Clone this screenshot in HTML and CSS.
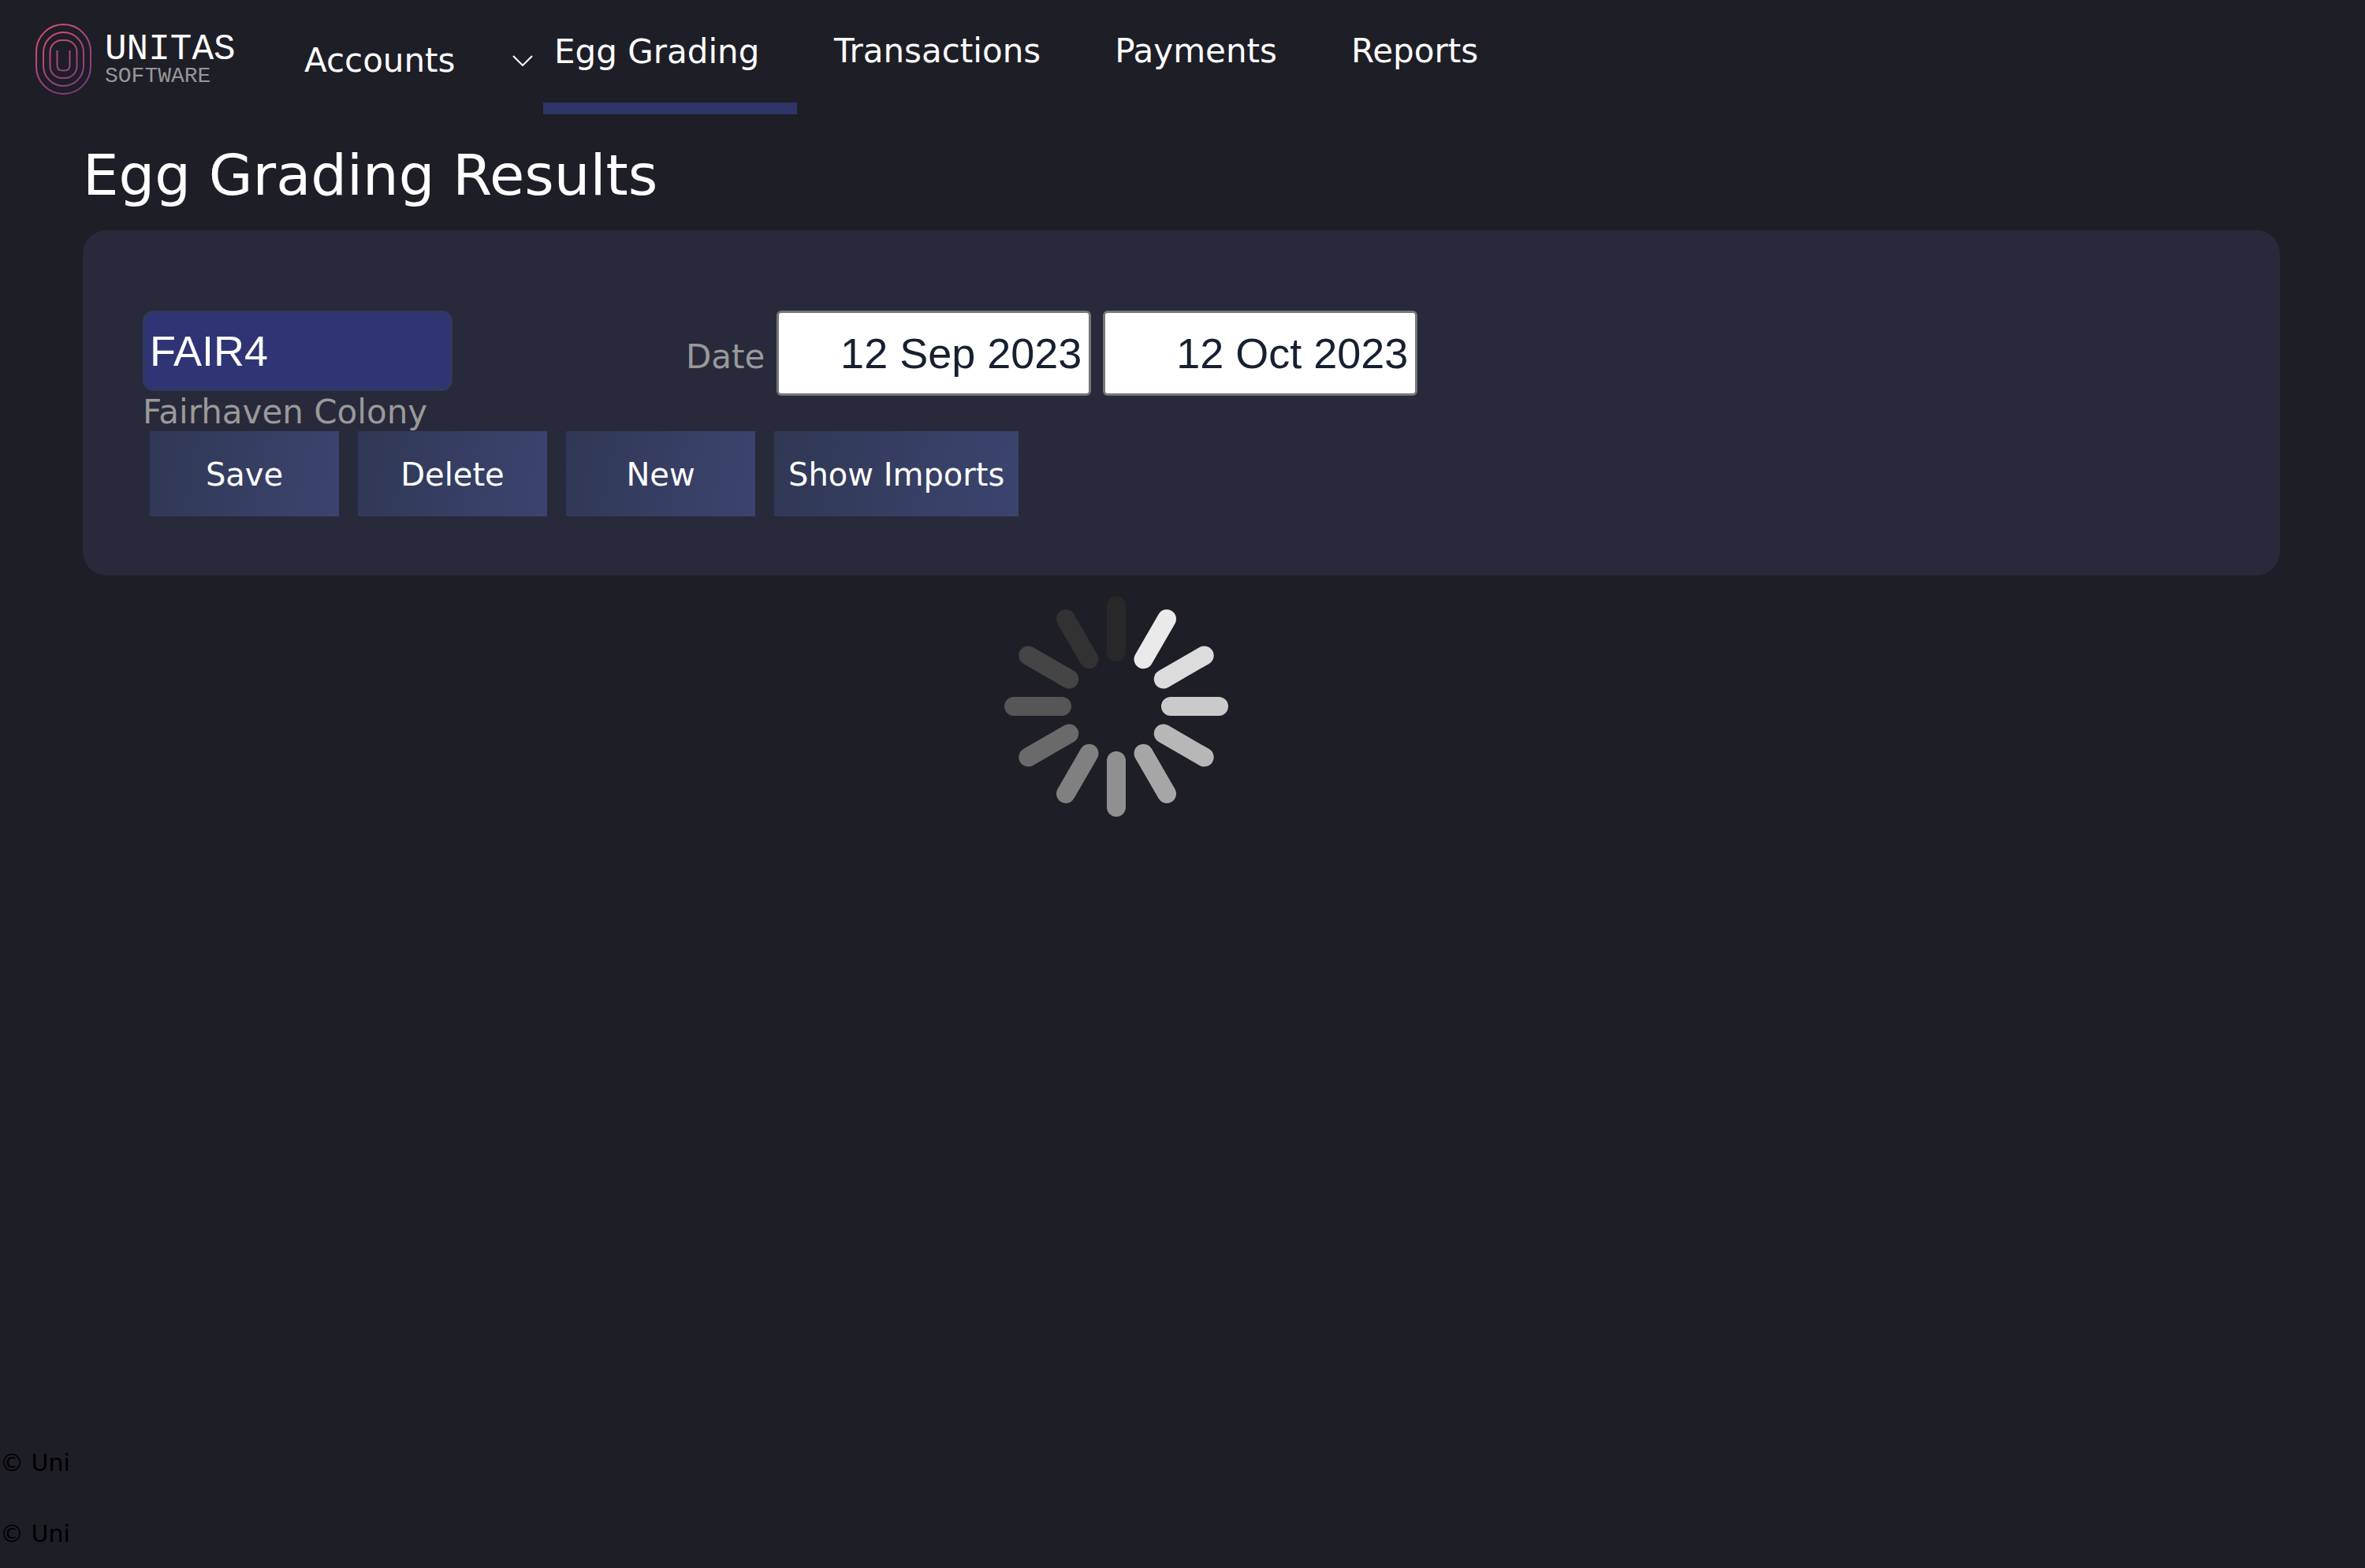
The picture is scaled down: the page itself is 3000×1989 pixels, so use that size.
FILE: index.html
```html
<!DOCTYPE html>
<html lang="en">
<head>
<meta charset="utf-8">
<title>Egg Grading Results</title>
<link rel="stylesheet" href="styles.css">
</head>
<body>
<header class="header">
  <a class="brand" href="#">
    <svg class="brand-mark" viewBox="0 0 71 90" fill="none" stroke="url(#brand)" stroke-width="2" aria-hidden="true">
      <defs>
        <linearGradient id="brand" gradientUnits="userSpaceOnUse" x1="10" y1="5" x2="62" y2="85">
          <stop offset="0" stop-color="#dc4f6f"/>
          <stop offset="1" stop-color="#733a88"/>
        </linearGradient>
      </defs>
      <rect x="1" y="1" width="69" height="88" rx="34.5"/>
      <rect x="10" y="11" width="51" height="68" rx="25.5"/>
      <rect x="18.500" y="21" width="34" height="48" rx="15"/>
      <path d="M27.500 34V52.500Q27.500 59.500 34 59.500H37Q43.500 59.500 43.500 52.500V34"/>
    </svg>
    <span class="brand-text">
      <span class="brand-name">UNITAS</span>
      <span class="brand-sub">SOFTWARE</span>
    </span>
  </a>
  <nav class="nav">
    <a class="nav-link nav-accounts" href="#">Accounts
      <svg class="chevron" viewBox="0 0 26 14" fill="none" stroke="#fff" stroke-width="2" aria-hidden="true"><path d="M1 1L13 13L25 1"/></svg>
    </a>
    <a class="nav-link nav-active" href="#">Egg Grading</a>
    <a class="nav-link" href="#">Transactions</a>
    <a class="nav-link" href="#">Payments</a>
    <a class="nav-link" href="#">Reports</a>
  </nav>
</header>
<main class="main">
  <h1 class="title">Egg Grading Results</h1>
  <form class="panel">
    <div class="fields">
      <div class="supplier">
        <input class="input-code" id="code" type="text" value="FAIR4">
        <label class="caption" for="code">Fairhaven Colony</label>
      </div>
      <div class="dates">
        <label class="date-label" for="from">Date</label>
        <input class="input-date" id="from" type="text" value="12 Sep 2023">
        <input class="input-date" id="to" type="text" value="12 Oct 2023" aria-label="Date to">
      </div>
    </div>
    <div class="actions">
      <button class="button" type="button">Save</button>
      <button class="button" type="button">Delete</button>
      <button class="button" type="button">New</button>
      <button class="button" type="button">Show Imports</button>
    </div>
  </form>
  <div class="loading" role="status" aria-label="Loading">
    <svg class="spinner" viewBox="-142 -141 284 282" stroke-width="24" stroke-linecap="round" aria-hidden="true">
      <path d="M0 -128V-69" stroke="#282828"/>
      <path d="M0 -128V-69" stroke="#eaeaea" transform="rotate(30)"/>
      <path d="M0 -129V-69" stroke="#dcdcdc" transform="rotate(60)"/>
      <path d="M0 -130V-69" stroke="#cacaca" transform="rotate(90)"/>
      <path d="M0 -129V-69" stroke="#b7b7b7" transform="rotate(120)"/>
      <path d="M0 -128V-69" stroke="#a6a6a6" transform="rotate(150)"/>
      <path d="M0 -128V-69" stroke="#909090" transform="rotate(180)"/>
      <path d="M0 -128V-69" stroke="#808080" transform="rotate(210)"/>
      <path d="M0 -129V-69" stroke="#6a6a6a" transform="rotate(240)"/>
      <path d="M0 -130V-69" stroke="#565656" transform="rotate(270)"/>
      <path d="M0 -129V-69" stroke="#454545" transform="rotate(300)"/>
      <path d="M0 -128V-69" stroke="#323232" transform="rotate(330)"/>
    </svg>
  </div>
</main>
<footer class="footer">
  <p class="copyright">© Uni</p>
  <p class="copyright">© Uni</p>
</footer>
</body>
</html>
```
FILE: styles.css
```css
* {
  box-sizing: border-box;
}

body {
  display: flex;
  flex-direction: column;
  min-height: 100vh;
  margin: 0;
  background: #1e1e26;
  color: #fff;
  font-family: Verdana, "DejaVu Sans", sans-serif;
  font-size: 42px;
  line-height: 48px;
}

.header {
  display: flex;
  align-items: flex-start;
}

.brand {
  display: flex;
  gap: 17px;
  width: 386px;
  padding: 30px 0 0 45px;
  color: #fff;
  font-family: "Liberation Mono", monospace;
  text-decoration: none;
}

.brand-mark {
  width: 71px;
  height: 90px;
}

.brand-text {
  display: flex;
  flex-direction: column;
  padding-top: 13px;
}

.brand-name {
  font-size: 46px;
  line-height: 40px;
}

.brand-sub {
  color: #96969a;
  font-size: 28px;
  line-height: 28px;
}

.nav {
  display: flex;
  align-items: flex-start;
}

.nav-link {
  margin-right: 94px;
  padding-top: 41px;
  color: #fff;
  text-decoration: none;
  white-space: nowrap;
}

.nav-accounts {
  display: flex;
  align-items: center;
  justify-content: space-between;
  width: 290px;
  margin-right: 13px;
  padding-top: 53px;
}

.chevron {
  width: 26px;
  height: 14px;
}

.nav-active {
  width: 322px;
  margin-right: 47px;
  padding: 42px 0 40px 14px;
  border-bottom: 15px solid #2f3469;
}

.main {
  flex: 1;
  padding: 36px 108px 0 105px;
}

.title {
  margin: 0 0 28px;
  font-size: 72px;
  font-weight: 400;
  line-height: 83px;
}

.panel {
  padding: 102px 76px 75px;
  border-radius: 30px;
  background: #28293a;
}

.fields {
  display: grid;
  grid-template-columns: 689px 1fr;
}

.supplier {
  display: flex;
  flex-direction: column;
  align-items: flex-start;
}

.input-code,
.input-date {
  font-family: Arial, "Liberation Sans", sans-serif;
  font-size: 54px;
}

.input-code {
  width: 393px;
  height: 102px;
  padding: 0 6px;
  border: 3px solid #303a5a;
  border-radius: 14px;
  background: #2f3574;
  color: #fff;
}

.caption {
  padding-top: 3px;
  color: #999;
  line-height: 48px;
}

.dates {
  display: flex;
  align-items: baseline;
  gap: 15px;
}

.date-label {
  color: #999;
}

.input-date {
  width: 399px;
  height: 108px;
  padding: 0 9px;
  border: 3px solid #767676;
  border-radius: 6px;
  background: #fff;
  color: #162030;
  text-align: right;
}

.actions {
  display: flex;
  gap: 24px;
  padding-left: 9px;
}

.button {
  min-width: 240px;
  height: 108px;
  padding: 2px 18px 0;
  border: 0;
  background: linear-gradient(100deg, #303854, #3b446f);
  color: #fff;
  font-family: inherit;
  font-size: 40px;
}

.loading {
  display: flex;
  justify-content: center;
  margin-top: 25px;
  padding-right: 166px;
}

.spinner {
  width: 284px;
  height: 282px;
}

.footer {
  display: flex;
  flex-direction: column;
  gap: 44px;
  padding: 0 0 20px;
  color: #000;
  font-size: 30px;
  line-height: 46px;
}

.copyright {
  margin: 0;
}
```
